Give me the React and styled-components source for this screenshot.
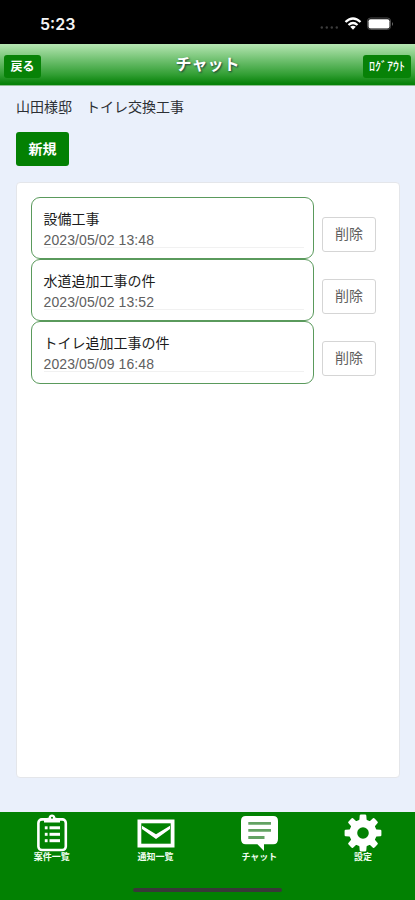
import React from 'react';
import styled, { createGlobalStyle } from 'styled-components';

const GlobalStyle = createGlobalStyle`
  * {
    box-sizing: border-box;
  }

  body {
    margin: 0;
    font-family: 'Liberation Sans', 'Noto Sans CJK JP', sans-serif;
  }

  button {
    padding: 0;
    font-family: inherit;
    cursor: pointer;
  }
`;

const Screen = styled.div`
  display: flex;
  flex-direction: column;
  width: 415px;
  height: 900px;
  overflow: hidden;
  background-color: #eaf0fb;
`;

// --- STATUS BAR ---

const StatusBar = styled.div`
  display: flex;
  flex: 0 0 44px;
  align-items: center;
  justify-content: space-between;
  padding: 3px 19px 0 40px;
  background-color: #000000;
`;

const Clock = styled.span`
  color: #f4f4f4;
  font-family: Inter, sans-serif;
  font-size: 16px;
  font-weight: 600;
  line-height: 20px;
`;

const StatusIcons = styled.svg`
  display: block;
  width: 76px;
  height: 16px;
`;

// --- HEADER ---

const Header = styled.header`
  display: grid;
  flex: 0 0 42px;
  grid-template-columns: 60px 1fr 60px;
  align-items: center;
  padding: 0 4px;
  border-bottom: 1px solid #8fbf93;
  background: linear-gradient(#b6e6b3 0%, #76c476 35%, #319e33 75%, #078209 97%);
`;

const HeaderTitle = styled.h1`
  margin: 0;
  color: #ffffff;
  font-size: 16px;
  font-weight: 700;
  line-height: 20px;
  text-align: center;
  text-shadow: 1px 1px 2px #1c3d38;
`;

const HeaderButton = styled.button`
  justify-self: ${({ $end }) => ($end ? 'end' : 'start')};
  width: ${({ $end }) => ($end ? '48px' : '37px')};
  height: 23px;
  margin-top: 3px;
  border: 0;
  border-radius: 3px;
  background-color: #078207;
  color: #ffffff;
  font-size: 12px;
  font-weight: ${({ $end }) => ($end ? 500 : 700)};
  line-height: 24px;
  white-space: nowrap;
`;

// --- CONTENT ---

const Content = styled.main`
  display: flex;
  flex: 1;
  flex-direction: column;
  align-items: flex-start;
  padding: 11px 15px 34px 16px;
`;

const ProjectName = styled.p`
  margin: 0 0 15px;
  color: #2c2f34;
  font-size: 14px;
  line-height: 20px;
`;

const NewButton = styled.button`
  width: 53px;
  height: 34px;
  margin-bottom: 16px;
  border: 0;
  border-radius: 3px;
  background-color: #038003;
  color: #ffffff;
  font-size: 14px;
  font-weight: 700;
  line-height: 34px;
`;

const ThreadPanel = styled.section`
  flex: 1;
  align-self: stretch;
  padding: 14px 23px 0 15px;
  border: 1px solid #e4e6ea;
  border-radius: 4px;
  background-color: #ffffff;
`;

const ThreadRow = styled.div`
  display: flex;
  align-items: center;
  height: 62.2px;
`;

const ThreadCard = styled.div`
  width: 283px;
  height: 62.2px;
  margin-left: -1px;
  padding: 11px 9px 0 11.5px;
  border: 1px solid #5a9a5c;
  border-radius: 9px;
`;

const ThreadBody = styled.div`
  height: 39px;
  border-bottom: 1px solid #f1f1f1;
`;

const ThreadTitle = styled.div`
  color: #1c1c1c;
  font-size: 14px;
  line-height: 21px;
`;

const ThreadDate = styled.div`
  color: #606060;
  font-size: 14px;
  line-height: 20px;
  letter-spacing: 0.1px;
`;

const DeleteButton = styled.button`
  width: 54px;
  height: 35px;
  margin: 12px 0 0 8px;
  border: 1px solid #d5d5d5;
  border-radius: 3px;
  background-color: #ffffff;
  color: #606060;
  font-size: 14px;
  line-height: 33px;
`;

// --- TAB BAR ---

const TabBar = styled.nav`
  display: flex;
  flex: 0 0 88px;
  flex-direction: column;
  align-items: center;
  justify-content: space-between;
  padding-bottom: 8px;
  background-color: #028102;
`;

const Tabs = styled.div`
  display: grid;
  grid-template-columns: repeat(4, 1fr);
  width: 100%;
`;

const Tab = styled.div`
  display: flex;
  flex-direction: column;
  align-items: center;
  padding-top: 2px;
`;

const TabIcon = styled.svg`
  display: block;
  width: 38px;
  height: 38px;
`;

const TabLabel = styled.span`
  color: #f2fff2;
  font-size: 9px;
  font-weight: 700;
  line-height: 11px;
`;

const HomeIndicator = styled.div`
  width: 149px;
  height: 4px;
  border-radius: 2px;
  background-color: #383838;
`;

const threads = [
  { title: '設備工事', date: '2023/05/02 13:48' },
  { title: '水道追加工事の件', date: '2023/05/02 13:52' },
  { title: 'トイレ追加工事の件', date: '2023/05/09 16:48' },
];

const ClipboardIcon = () => (
  <TabIcon viewBox="0 0 38 38">
    <rect x="5.4" y="5.4" width="27.4" height="30.6" rx="3.5" fill="none" stroke="#fff" strokeWidth="2.6" />
    <path d="M11 8.6V6Q11.5 4.2 15.5 3.8Q16.3.6 19 .6T22.5 3.8Q26.5 4.2 27 6V8.6Z" fill="#fff" />
    <circle cx="19" cy="3.8" r="1" fill="#028102" />
    <g fill="#fff">
      <rect x="11.8" y="12.3" width="2.8" height="3" />
      <rect x="16.5" y="12.3" width="10.5" height="3" />
      <rect x="11.8" y="18.8" width="2.8" height="3" />
      <rect x="16.5" y="18.8" width="10.5" height="3" />
      <rect x="11.8" y="25.2" width="2.8" height="3" />
      <rect x="16.5" y="25.2" width="10.5" height="3" />
    </g>
  </TabIcon>
);

const MailIcon = () => (
  <TabIcon viewBox="0 0 38 38">
    <rect x="2.4" y="7.4" width="33.2" height="24.2" fill="none" stroke="#fff" strokeWidth="3.8" />
    <path d="M5 11.8 19 20.3 33 11.8V15L19 25 5 15Z" fill="#fff" />
  </TabIcon>
);

const ChatIcon = () => (
  <TabIcon viewBox="0 0 38 38">
    <path
      d="M5.8 2H33.2Q38 2 38 7V25Q38 30.3 33.2 30.3H24V37L17.4 30.3H5.8Q1 30.3 1 25V7Q1 2 5.8 2Z"
      fill="#fff"
    />
    <path d="M8.3 9.3H31M8.3 16.4H31M8.3 23.5H24.5" stroke="#63a263" strokeWidth="2.8" />
  </TabIcon>
);

const GearIcon = () => (
  <TabIcon viewBox="0 0 38 38">
    <g fill="#fff">
      {[0, 45, 90, 135, 180, 225, 270, 315].map((angle) => (
        <path
          key={angle}
          d="M13.6 8.5 15.4 5.5 15.7 1.6Q15.8.6 17 .6H21Q22.2.6 22.3 1.6L22.6 5.5 24.4 8.5Z"
          transform={`rotate(${angle} 19 19)`}
        />
      ))}
    </g>
    <circle cx="19" cy="19" r="9.7" fill="none" stroke="#fff" strokeWidth="7.8" />
  </TabIcon>
);

const tabs = [
  { label: '案件一覧', Icon: ClipboardIcon },
  { label: '通知一覧', Icon: MailIcon },
  { label: 'チャット', Icon: ChatIcon },
  { label: '設定', Icon: GearIcon },
];

const App = () => (
  <>
    <GlobalStyle />
    <Screen>
      <StatusBar>
        <Clock>5:23</Clock>
        <StatusIcons viewBox="0 0 76 16">
          <g fill="#3c3c3c">
            <circle cx="1.8" cy="11.5" r="1.2" />
            <circle cx="6.8" cy="11.5" r="1.2" />
            <circle cx="11.8" cy="11.5" r="1.2" />
            <circle cx="16.8" cy="11.5" r="1.2" />
          </g>
          <g fill="none" stroke="#fff" strokeWidth="2.3">
            <path d="M25.5 6Q33-1 40.5 6" />
            <path d="M28.5 9Q33 5 37.5 9" />
          </g>
          <path d="M30.2 10.7Q33 8.6 35.8 10.7L33 13.7Z" fill="#fff" />
          <rect x="47.5" y="2" width="23" height="11.5" rx="3" fill="none" stroke="#4c4c4c" />
          <rect x="48.5" y="3.2" width="21" height="9.2" rx="2" fill="#fff" />
          <path d="M72 6Q74 8 72 10Z" fill="#666" />
        </StatusIcons>
      </StatusBar>

      <Header>
        <HeaderButton>戻る</HeaderButton>
        <HeaderTitle>チャット</HeaderTitle>
        <HeaderButton $end>ﾛｸﾞｱｳﾄ</HeaderButton>
      </Header>

      <Content>
        <ProjectName>山田様邸　トイレ交換工事</ProjectName>
        <NewButton>新規</NewButton>
        <ThreadPanel>
          {threads.map((thread) => (
            <ThreadRow key={thread.title}>
              <ThreadCard>
                <ThreadBody>
                  <ThreadTitle>{thread.title}</ThreadTitle>
                  <ThreadDate>{thread.date}</ThreadDate>
                </ThreadBody>
              </ThreadCard>
              <DeleteButton>削除</DeleteButton>
            </ThreadRow>
          ))}
        </ThreadPanel>
      </Content>

      <TabBar>
        <Tabs>
          {tabs.map(({ label, Icon }) => (
            <Tab key={label}>
              <Icon />
              <TabLabel>{label}</TabLabel>
            </Tab>
          ))}
        </Tabs>
        <HomeIndicator />
      </TabBar>
    </Screen>
  </>
);

export default App;
